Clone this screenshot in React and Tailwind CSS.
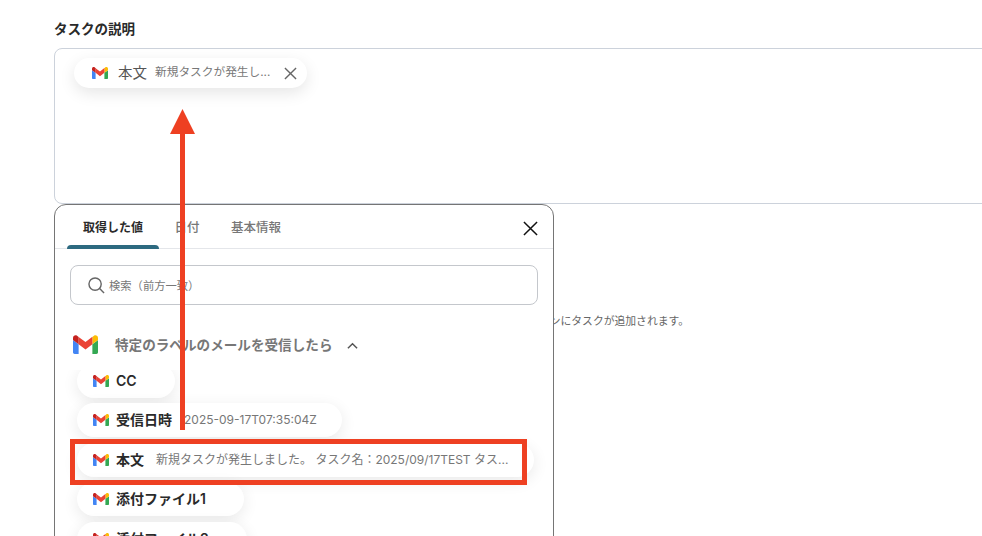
const font = "font-['Inter','Noto_Sans_CJK_JP',sans-serif]";

function Gmail({ className }) {
  return (
    <svg viewBox="0 0 24 18" className={className}>
      <path d="M1.6 18h3.8V8.8L0 4.7v11.7C0 17.3.7 18 1.6 18z" fill="#4285F4" />
      <path d="M18.6 18h3.8c.9 0 1.6-.7 1.6-1.6V4.7l-5.4 4.1z" fill="#34A853" />
      <path d="M18.6 1.7v7.1L24 4.7V2.5c0-2-2.300-3.200-3.900-2z" fill="#FBBC04" />
      <path d="M5.400 8.800V1.700L12 6.600l6.600-5.000v7.200L12 13.700z" fill="#EA4335" />
      <path d="M0 2.500v2.200l5.400 4.100V1.700L3.900.5C2.300-.7 0 .5 0 2.500z" fill="#C5221F" />
    </svg>
  );
}

function Pill({ title, value, wide }) {
  return (
    <div className={`flex h-[34px] items-center rounded-full bg-white pl-4 pr-[26px] shadow-[0_4px_16px_rgba(0,0,0,0.09)] ${wide}`}>
      <Gmail className="h-3 w-4 shrink-0" />
      <span className="ml-[7px] whitespace-nowrap text-sm leading-none font-semibold text-[#2a2a2a]">{title}</span>
      {value && <span className="ml-3 whitespace-nowrap text-xs leading-none text-[#777]">{value}</span>}
    </div>
  );
}

export default function App() {
  return (
    <div className={`relative h-[536px] w-[982px] overflow-hidden bg-white pt-[21px] pl-[54px] ${font}`}>
      <div className="text-[13.5px] leading-[17px] font-semibold text-[#2a2a2a]">タスクの説明</div>
      <div className="mt-[10px] h-[156px] w-[1000px] rounded-l-lg border border-[#ccd2db] bg-white pt-[9px] pl-[19px]">
        <div className="flex h-[30px] w-[233px] items-center rounded-full bg-white pl-[18px] shadow-[0_5px_16px_rgba(0,0,0,0.1)]">
          <Gmail className="h-3 w-4 shrink-0" />
          <span className="ml-[10px] whitespace-nowrap text-[14.5px] leading-none text-[#555]">本文</span>
          <span className="ml-2 whitespace-nowrap text-[11.7px] leading-none text-[#777]">新規タスクが発生し...</span>
          <svg viewBox="0 0 14 14" className="ml-[14px] h-[13px] w-[13px] shrink-0" stroke="#666" strokeWidth="1.5" fill="none">
            <path d="M1 1l12 12M13 1L1 13" />
          </svg>
        </div>
      </div>
      <div className="mt-[111px] w-[635px] text-right text-[10.8px] leading-[14px] text-[#666]">
        指定したプロジェクトのセクションにタスクが追加されます。
      </div>

      <div className="absolute top-[204px] left-[54px] h-[400px] w-[500px] rounded-xl border border-[#757575] bg-white">
        <div className="relative flex h-[44px] border-b border-[#e4e6ea] pl-3">
          <div className="relative flex h-[44px] w-[92px] items-center justify-center pt-[2px] text-xs font-semibold text-[#2a2a2a]">
            取得した値
            <div className="absolute right-0 bottom-0 left-0 h-[4px] rounded-t bg-[#2d6a80]" />
          </div>
          <div className="flex h-[44px] w-[56px] items-center justify-center pt-[2px] text-[12.5px] font-medium text-[#777]">日付</div>
          <div className="flex h-[44px] w-[82px] items-center justify-center pt-[2px] text-[12.5px] font-medium text-[#777]">基本情報</div>
          <svg viewBox="0 0 16 16" className="absolute top-[16px] right-[15px] h-[15px] w-[15px]" stroke="#111" strokeWidth="1.6" fill="none">
            <path d="M1 1l14 14M15 1L1 15" />
          </svg>
        </div>
        <div className="mx-[15px] mt-4 flex h-10 items-center rounded-lg border border-[#c4c7cc] pl-[17px]">
          <svg viewBox="0 0 18 18" className="h-[17px] w-[17px]" stroke="#666" strokeWidth="1.5" fill="none">
            <circle cx="7.500" cy="7.500" r="6.500" />
            <path d="M12.300 12.300L17 17" />
          </svg>
          <span className="mt-[2px] ml-1 text-[11.3px] text-[#777]">検索（前方一致）</span>
        </div>
        <div className="mt-[30px] flex items-center pl-[18px]">
          <Gmail className="h-[19px] w-[25px]" />
          <span className="mt-[2px] ml-[17px] text-[13.6px] leading-none font-semibold text-[#777]">特定のラベルのメールを受信したら</span>
          <svg viewBox="0 0 12 8" className="mt-[2px] ml-[14px] h-2 w-[11px]" stroke="#555" strokeWidth="1.6" fill="none">
            <path d="M1 6.500L6 1.500l5 5" />
          </svg>
        </div>
        <div className="mt-[16px] h-[200px] overflow-hidden pl-[22px]">
          <div className="flex -translate-y-[6px] flex-col gap-[5.4px]">
            <Pill title="CC" wide="w-[98px]" />
            <Pill title="受信日時" value="2025-09-17T07:35:04Z" wide="w-[265px]" />
            <Pill title="本文" value="新規タスクが発生しました。 タスク名：2025/09/17TEST タス..." wide="w-[457px]" />
            <Pill title="添付ファイル1" wide="w-[167px]" />
            <Pill title="添付ファイル2" wide="w-[170px]" />
          </div>
        </div>
      </div>

      <div className="absolute top-[439px] left-[70px] h-[46px] w-[457px] border-[5px] border-[#ee4022]" />
      <div className="absolute top-[130px] left-[180px] h-[300px] w-[5px] bg-[#ee4022]" />
      <svg viewBox="0 0 26 26" className="absolute top-[109px] left-[170px] h-[25px] w-[25px]">
        <path d="M13 0L26 26H0z" fill="#ee4022" />
      </svg>
    </div>
  );
}
